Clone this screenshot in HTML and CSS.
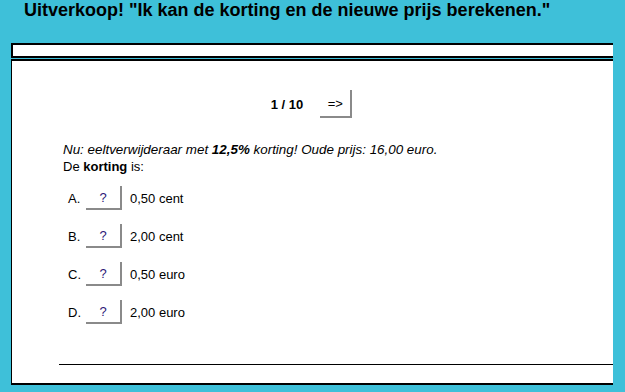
FILE: index.html
```html
<!DOCTYPE html>
<html lang="nl">
<head>
<meta charset="utf-8">
<title>Uitverkoop</title>
<link rel="stylesheet" href="styles.css">
</head>
<body>
<h1 class="title">Uitverkoop! "Ik kan de korting en de nieuwe prijs berekenen."</h1>
<div class="topbar"></div>
<div class="main">
  <div class="nav">
    <span class="count">1 / 10</span>
    <button class="btn next">=&gt;</button>
  </div>
  <div class="question">
    <p class="q1">Nu: eeltverwijderaar met <b>12,5%</b> korting! Oude prijs: 16,00 euro.</p>
    <p class="q2">De <b>korting</b> is:</p>
  </div>
  <div class="options">
    <div class="opt"><span class="lbl">A.</span><button class="btn ans">?</button><span class="val">0,50 cent</span></div>
    <div class="opt"><span class="lbl">B.</span><button class="btn ans">?</button><span class="val">2,00 cent</span></div>
    <div class="opt"><span class="lbl">C.</span><button class="btn ans">?</button><span class="val">0,50 euro</span></div>
    <div class="opt"><span class="lbl">D.</span><button class="btn ans">?</button><span class="val">2,00 euro</span></div>
  </div>
  <div class="rule"></div>
</div>
</body>
</html>
```
FILE: styles.css
```css
html, body {
  margin: 0;
  padding: 0;
}
body {
  background: #3ec0d9;
  height: 392px;
  overflow: hidden;
  font-family: "Liberation Sans", Arial, sans-serif;
  color: #000;
}
.title {
  margin: 0;
  padding: 0 0 0 24px;
  font-size: 18px;
  line-height: 21px;
  font-weight: bold;
  color: #000;
}
.topbar {
  margin: 22px 12px 0 11px;
  height: 11px;
  background: #fff;
  border: 2px solid #000;
  border-right: none;
}
.main {
  margin: 1px 12px 0 11px;
  height: 326px;
  box-sizing: border-box;
  background: #fff;
  border-top: 2px solid #000;
  border-left: 1px solid #000;
  border-bottom: 2px solid #000;
  overflow: hidden;
  font-size: 13px;
}
.nav {
  margin-top: 29px;
  height: 28px;
  display: flex;
  align-items: center;
  justify-content: center;
  gap: 17px;
  padding-right: 2px;
}
.count {
  font-weight: bold;
}
.btn {
  font-family: "Liberation Sans", Arial, sans-serif;
  font-size: 13px;
  background: #fff;
  border-style: solid;
  border-width: 0 2px 2px 0;
  border-color: #fff #8a8a8a #8a8a8a #fff;
  padding: 0;
  margin: 0;
  color: #000;
}
.next {
  width: 32px;
  height: 28px;
}
.question {
  margin-top: 23px;
  padding-left: 51px;
}
.question p {
  margin: 0;
  line-height: 17px;
}
.q1 {
  font-style: italic;
  font-size: 13.4px;
}
.options {
  margin-top: 11px;
  padding-left: 56px;
  display: flex;
  flex-direction: column;
  gap: 14px;
}
.opt {
  display: flex;
  align-items: center;
  height: 24px;
}
.lbl {
  width: 18px;
}
.ans {
  width: 36px;
  height: 24px;
  margin-right: 8px;
  color: #2b1a78;
}
.rule {
  margin: 40px 0 0 47px;
  height: 1px;
  background: #000;
}
```
